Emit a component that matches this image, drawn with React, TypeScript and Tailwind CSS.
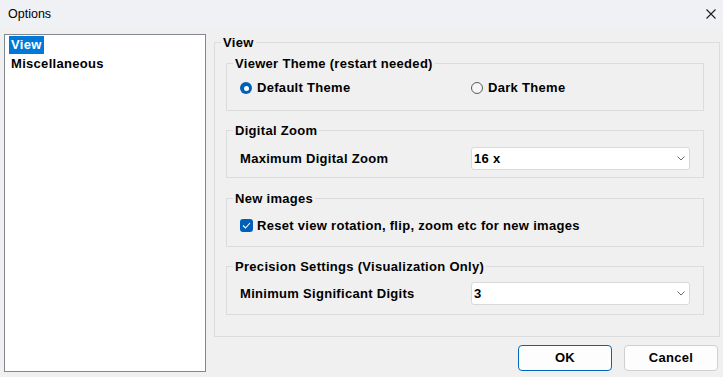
import React from "react";

function GroupBox({ title, className, bodyClassName, children }: { title: string; className?: string; bodyClassName: string; children: React.ReactNode }) {
  return (
    <fieldset className={`border border-[#dcdcdc] ${className ?? ""}`}>
      <legend className="ml-[6px] px-[2px] leading-[15px] font-bold">{title}</legend>
      <div className={bodyClassName}>{children}</div>
    </fieldset>
  );
}

function Radio({ checked, label }: { checked?: boolean; label: string }) {
  return (
    <div className="flex items-center gap-[5px]">
      {checked ? (
        <span className="w-[12px] h-[12px] rounded-full bg-[#005fb8] flex items-center justify-center shrink-0">
          <span className="w-[5px] h-[5px] rounded-full bg-white" />
        </span>
      ) : (
        <span className="w-[12px] h-[12px] rounded-full border border-[#5a5a5a] bg-[#f7f7f7] shrink-0" />
      )}
      <span className="font-bold">{label}</span>
    </div>
  );
}

function Combo({ value }: { value: string }) {
  return (
    <div className="w-[219px] h-[23px] bg-white border border-[#d9d9d9] rounded-[3px] flex items-center justify-between pl-[2px] pr-[4px] shrink-0">
      <span className="font-bold">{value}</span>
      <svg width="8" height="5" viewBox="0 0 8 5" className="shrink-0">
        <path d="M0.5 0.5 L4 4 L7.5 0.5" fill="none" stroke="#6b6b6b" strokeWidth="1" />
      </svg>
    </div>
  );
}

export default function App() {
  return (
    <div className="w-[723px] h-[377px] bg-[#f0f0f0] text-black text-[13px] tracking-[0.3px] font-['Liberation_Sans',Arial,sans-serif] flex flex-col overflow-hidden">
      <div className="h-[28px] bg-[#eff1f5] flex items-center justify-between pl-[8px] pr-[7px] shrink-0">
        <span className="text-[12.5px] tracking-normal">Options</span>
        <svg width="10" height="10" viewBox="0 0 10 10">
          <path d="M0.5 0.5 L9.5 9.5 M9.5 0.5 L0.5 9.5" stroke="#1c1c1c" strokeWidth="1.1" />
        </svg>
      </div>

      <div className="flex items-start pl-[4px] pr-[3px] pt-[6px] gap-[8px]">
        <div className="w-[202px] h-[338px] bg-white border border-[#828790] pl-[4px] pt-[1px] flex flex-col items-start shrink-0">
          <span className="h-[18px] leading-[18px] px-[2px] bg-[#0078d7] text-white font-bold">View</span>
          <span className="h-[19px] leading-[19px] px-[2px] font-bold">Miscellaneous</span>
        </div>

        <div className="flex-1 flex flex-col mt-[1px]">
          <GroupBox title="View" bodyClassName="pl-[11px] pr-[15px] pt-[6px] pb-[21px] flex flex-col">
            <GroupBox title="Viewer Theme (restart needed)" bodyClassName="pl-[13px] pr-[13px] pt-[9px] pb-[14px]">
              <div className="h-[16px] flex items-center">
                <div className="flex-1">
                  <Radio checked label="Default Theme" />
                </div>
                <div className="w-[219px]">
                  <Radio label="Dark Theme" />
                </div>
              </div>
            </GroupBox>

            <GroupBox title="Digital Zoom" className="mt-[12px]" bodyClassName="pl-[13px] pr-[13px] pt-[9px] pb-[7px] flex items-center">
              <span className="flex-1 font-bold">Maximum Digital Zoom</span>
              <Combo value="16 x" />
            </GroupBox>

            <GroupBox title="New images" className="mt-[13px]" bodyClassName="pl-[13px] pr-[13px] pt-[13px] pb-[14px]">
              <div className="h-[13px] flex items-center gap-[4px]">
                <span className="w-[13px] h-[13px] rounded-[3px] bg-[#005fb8] flex items-center justify-center shrink-0">
                  <svg width="9" height="7" viewBox="0 0 9 7">
                    <path d="M1 3.5 L3.5 6 L8 1" fill="none" stroke="white" strokeWidth="1.1" />
                  </svg>
                </span>
                <span className="font-bold">Reset view rotation, flip, zoom etc for new images</span>
              </div>
            </GroupBox>

            <GroupBox title="Precision Settings (Visualization Only)" className="mt-[12px]" bodyClassName="pl-[13px] pr-[13px] pt-[8px] pb-[9px] flex items-center">
              <span className="flex-1 font-bold">Minimum Significant Digits</span>
              <Combo value="3" />
            </GroupBox>
          </GroupBox>

          <div className="flex justify-end gap-[12px] mt-[8px] mr-[2px]">
            <button className="w-[94px] h-[26px] rounded-[4px] border border-[#0067c0] bg-[#fdfdfd] font-bold">OK</button>
            <button className="w-[94px] h-[26px] rounded-[4px] border border-[#d0d0d0] bg-[#fdfdfd] font-bold">Cancel</button>
          </div>
        </div>
      </div>
    </div>
  );
}
